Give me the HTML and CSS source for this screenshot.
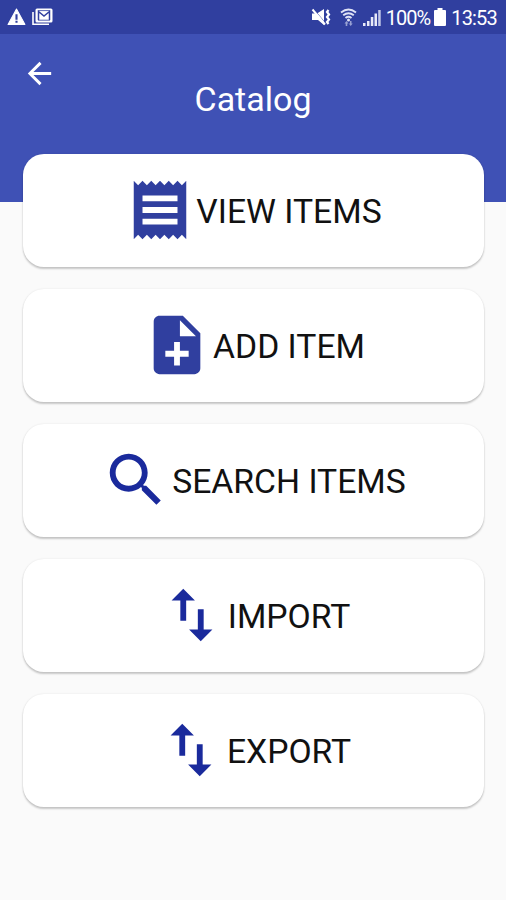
FILE: index.html
```html
<!DOCTYPE html>
<html lang="en">
<head>
    <meta charset="UTF-8">
    <meta name="viewport" content="width=device-width, initial-scale=1">
    <title>Catalog</title>
    <link rel="stylesheet" href="styles.css">
</head>
<body>

<div class="status-bar">
    <svg class="status-warning" width="19" height="18" viewBox="0 0 18 17">
        <path fill="#fff" stroke="#fff" stroke-linejoin="round" d="M9 1L17 15.500H1z"/>
        <path fill="#303f9f" d="M8 6h2v5H8zM8 12h2v2H8z"/>
    </svg>
    <svg class="status-mail" width="21" height="18" viewBox="0 0 21 18">
        <path fill="none" stroke="#fff" stroke-width="1.600" d="M1 4v12.200h16"/>
        <rect x="3.500" y=".5" width="17" height="14" rx="1.500" fill="#fff"/>
        <path fill="none" stroke="#303f9f" stroke-width="1.500" d="M6.500 12V3.500l5.500 4.500 5.500-4.500V12"/>
        <path fill="none" stroke="#303f9f" stroke-width=".8" d="M6 12.200h12M6 2.600h12"/>
    </svg>
    <div class="status-right">
        <svg class="status-mute" width="20" height="18" viewBox="0 0 20 18">
            <path fill="#fff" d="M1 5.500h5l7-4.500v16l-6-5H1z"/>
            <path stroke="#303f9f" stroke-width=".7" d="M4 2.500l10 12"/>
            <path stroke="#fff" stroke-width="2" d="M1.500 1.500l12.500 15"/>
            <path fill="none" stroke="#fff" stroke-width="2.200" d="M17.500 2l-1.500 2 2 2.500-2 2.500 2 2.500-2 2.500 1.500 2"/>
        </svg>
        <svg class="status-wifi" width="17" height="19" viewBox="0 0 17 19">
            <g fill="none" stroke="#dfe2f5" stroke-width="1.900">
                <path d="M1 4.500q7.500-6 15 0M3.200 7.300q5.300-4.200 10.600 0M5.500 10q3-2.300 6 0"/>
            </g>
            <circle cx="8.500" cy="12" r="1.500" fill="#dfe2f5"/>
            <path fill="#98a1d3" d="M4.500 15.500l2-2.500 2 2.500h-1.200V18H5.700v-2.500zM8.800 15.500H10V13h1.500v2.500h1.200l-2 2.500z"/>
        </svg>
        <svg class="status-signal" width="18" height="17" viewBox="0 0 18 17">
            <path fill="#e8eaf8" d="M0 14h2.500v3H0zM4 12h2.500v5H4zM7.800 8h2.500v9H7.800zM11.500 4.500H14V17h-2.500z"/>
            <path fill="#c3c9e8" d="M15.200 1h2.500v16h-2.500z"/>
        </svg>
        <span class="status-percent">100%</span>
        <svg class="status-battery" width="12" height="18" viewBox="0 0 12 18">
            <path fill="#fff" d="M3.500 0h5v2H11q1 0 1 1v14q0 1-1 1H1q-1 0-1-1V3q0-1 1-1h2.500z"/>
        </svg>
        <span class="status-time">13:53</span>
    </div>
</div>

<div class="header">
    <svg class="back" width="35" height="35" viewBox="0 0 24 24">
        <path d="M20 11H7.830l5.590-5.590L12 4l-8 8 8 8 1.410-1.410L7.830 13H20v-2z"/>
    </svg>
    <h1 class="title">Catalog</h1>
</div>

<div class="menu">
    <div class="card">
        <svg class="icon" viewBox="0 0 24 24">
            <path d="M18 17H6v-2h12v2zm0-4H6v-2h12v2zm0-4H6V7h12v2zM3 22l1.500-1.500L6 22l1.500-1.500L9 22l1.500-1.500L12 22l1.500-1.500L15 22l1.500-1.500L18 22l1.500-1.500L21 22V2l-1.500 1.500L18 2l-1.500 1.500L15 2l-1.500 1.500L12 2l-1.500 1.500L9 2 7.500 3.500 6 2 4.500 3.500 3 2v20z"/>
        </svg>
        <span class="label">VIEW ITEMS</span>
    </div>
    <div class="card">
        <svg class="icon" viewBox="0 0 24 24">
            <path d="M14 2H6c-1.100 0-1.990.9-1.990 2L4 20c0 1.100.89 2 1.990 2H18c1.100 0 2-.9 2-2V8l-6-6zm2 14h-3v3h-2v-3H8v-2h3v-3h2v3h3v2zm-3-7V3.500L18.500 9H13z"/>
        </svg>
        <span class="label">ADD ITEM</span>
    </div>
    <div class="card">
        <svg class="icon dark" viewBox="0 0 24 24">
            <path d="M15.500 14h-.79l-.28-.27C15.410 12.590 16 11.110 16 9.500 16 5.910 13.090 3 9.500 3S3 5.910 3 9.500 5.910 16 9.500 16c1.610 0 3.090-.59 4.230-1.570l.27.28v.79l5 4.990L20.490 19l-4.990-5zm-6 0C7.010 14 5 11.990 5 9.500S7.010 5 9.500 5 14 7.010 14 9.500 11.990 14 9.500 14z"/>
        </svg>
        <span class="label">SEARCH ITEMS</span>
    </div>
    <div class="card">
        <svg class="icon dark" viewBox="0 0 24 24">
            <path d="M9 3L5 6.990h3V14h2V6.990h3L9 3zm7 14.010V10h-2v7.010h-3L15 21l4-3.990h-3z"/>
        </svg>
        <span class="label">IMPORT</span>
    </div>
    <div class="card">
        <svg class="icon dark" viewBox="0 0 24 24">
            <path d="M9 3L5 6.990h3V14h2V6.990h3L9 3zm7 14.010V10h-2v7.010h-3L15 21l4-3.990h-3z"/>
        </svg>
        <span class="label">EXPORT</span>
    </div>
</div>

</body>
</html>
```

FILE: styles.css
```css
* {
    box-sizing: border-box;
}

body {
    margin: 0;
    height: 900px;
    overflow: hidden;
    background-color: #fafafa;
    font-family: Roboto, "Liberation Sans", sans-serif;
}

svg {
    display: block;
    flex-shrink: 0;
}

.status-bar {
    display: flex;
    align-items: center;
    height: 34px;
    padding: 0 9px 0 7px;
    background-color: #303f9f;
    color: #fff;
    font-size: 20px;
    letter-spacing: -0.8px;
}

.status-mail {
    margin-left: 6px;
}

.status-right {
    display: flex;
    align-items: center;
    margin-left: auto;
}

.status-wifi {
    margin-left: 9px;
}

.status-signal {
    margin-left: 6px;
}

.status-percent {
    margin-left: 5px;
    padding-top: 1px;
    letter-spacing: -1px;
}

.status-battery {
    margin-left: 4px;
}

.status-time {
    margin-left: 5px;
    padding-top: 1px;
}

.header {
    height: 168px;
    padding-top: 22px;
    background-color: #3f51b5;
}

.back {
    margin-left: 22px;
    fill: #fff;
}

.title {
    margin: -12px 0 0;
    color: #fff;
    font-size: 34px;
    font-weight: 400;
    line-height: 40px;
    text-align: center;
}

/* first card overlaps the header */
.menu {
    display: flex;
    flex-direction: column;
    gap: 22px;
    margin-top: -48.5px;
    padding: 0 22px 0 23px;
}

.card {
    display: flex;
    align-items: center;
    justify-content: center;
    height: 113px;
    border-radius: 21px;
    background-color: #fff;
    box-shadow: 0 2px 2px rgba(0, 0, 0, 0.2), 0 0 2px rgba(0, 0, 0, 0.1);
}

.icon {
    width: 70px;
    height: 70px;
    fill: #303f9f;
}

.icon.dark {
    fill: #1a2a9c;
}

.label {
    padding: 3px 0 0 1px;
    color: #111;
    font-size: 33.7px;
    line-height: 40px;
    white-space: nowrap;
}
```
